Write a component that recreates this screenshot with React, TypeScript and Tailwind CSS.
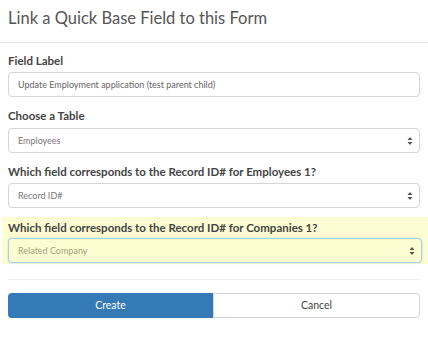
import React from "react";

const font = { fontFamily: "Lato, 'Open Sans', sans-serif" };

const Arrows: React.FC = () => (
  <svg width="6" height="10" viewBox="0 0 6 10" className="shrink-0">
    <path d="M3 1 L5.5 4 H0.5 Z" fill="#555" />
    <path d="M3 9 L5.5 6 H0.5 Z" fill="#555" />
  </svg>
);

const Select: React.FC<{ value: string; highlight?: boolean }> = ({ value, highlight }) => (
  <div
    className={
      highlight
        ? "flex h-[25px] items-center justify-between rounded-[4px] border border-[#a9cfe6] bg-[#fdfdd2] pl-[9px] pr-[6px] text-[9px] text-[#a4a27c] shadow-[0_0_2px_rgba(102,175,233,0.5)]"
        : "flex h-[25px] items-center justify-between rounded-[4px] border border-[#d4d4d4] bg-white pl-[9px] pr-[6px] text-[9px] text-[#777]"
    }
  >
    <span>{value}</span>
    <Arrows />
  </div>
);

const Label: React.FC<{ children: React.ReactNode }> = ({ children }) => (
  <div className="text-[11.5px] font-bold leading-[14px] text-[#444]">{children}</div>
);

export default function App() {
  return (
    <div className="h-[337px] w-[428px] overflow-hidden bg-white" style={font}>
      <div className="h-[43px] border-b border-[#eaeaea] px-[8px] pt-[7px]">
        <h1 className="text-[16.5px] font-normal leading-[22px] text-[#555]">
          Link a Quick Base Field to this Form
        </h1>
      </div>
      <div className="px-[8px] pt-[11px]">
        <Label>Field Label</Label>
        <div className="mt-[4px] flex h-[25px] items-center rounded-[4px] border border-[#d4d4d4] pl-[9px] text-[9px] text-[#666]">
          Update Employment application (test parent child)
        </div>
        <div className="mt-[12px]">
          <Label>Choose a Table</Label>
        </div>
        <div className="mt-[5px]">
          <Select value="Employees" />
        </div>
        <div className="mt-[12px]">
          <Label>Which field corresponds to the Record ID# for Employees 1?</Label>
        </div>
        <div className="mt-[4px]">
          <Select value="Record ID#" />
        </div>
      </div>
      <div className="mt-[9px] ml-[2px] bg-[#fdfdd3] px-[6px] pb-[1px] pt-[4px]">
        <Label>Which field corresponds to the Record ID# for Companies 1?</Label>
        <div className="mt-[3px]">
          <Select value="Related Company" highlight />
        </div>
      </div>
      <div className="mx-[8px] mt-[15px] border-t border-[#eeeeee]" />
      <div className="mx-[8px] mt-[13px] flex h-[25px] text-[10.5px]">
        <button className="flex flex-1 items-center justify-center rounded-l-[4px] bg-[#337ab7] text-white">
          Create
        </button>
        <button className="flex flex-1 items-center justify-center rounded-r-[4px] border border-[#d4d4d4] text-[#444]">
          Cancel
        </button>
      </div>
    </div>
  );
}
